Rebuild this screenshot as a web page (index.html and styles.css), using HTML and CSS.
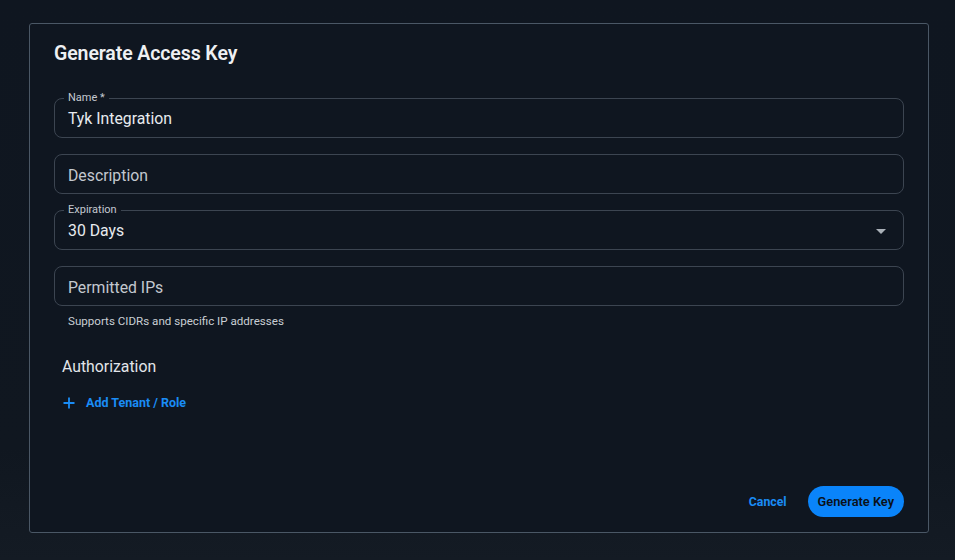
FILE: index.html
```html
<!DOCTYPE html>
<html>
<head>
<meta charset="utf-8">
<link rel="stylesheet" href="styles.css">
</head>
<body>
<div class="page">
  <div class="card">
    <h1 class="title">Generate Access Key</h1>
    <div class="form">
      <div class="field">
        <span class="float-label">Name *</span>
        <span class="value">Tyk Integration</span>
      </div>
      <div class="field">
        <span class="placeholder">Description</span>
      </div>
      <div class="field select">
        <span class="float-label">Expiration</span>
        <span class="value">30 Days</span>
        <svg class="caret" width="10" height="5" viewBox="0 0 10 5"><path d="M0 0h10L5 5z" fill="#a9b0b8"/></svg>
      </div>
      <div class="field-group">
        <div class="field">
          <span class="placeholder">Permitted IPs</span>
        </div>
        <div class="helper">Supports CIDRs and specific IP addresses</div>
      </div>
    </div>
    <div class="auth">
      <div class="auth-title">Authorization</div>
      <button class="add-btn">
        <svg width="12" height="12" viewBox="0 0 12 12"><path d="M6 0.5v11M0.5 6h11" stroke="#1a8cf5" stroke-width="1.8"/></svg>
        <span>Add Tenant / Role</span>
      </button>
    </div>
    <div class="actions">
      <button class="cancel">Cancel</button>
      <button class="primary">Generate Key</button>
    </div>
  </div>
</div>
</body>
</html>
```
FILE: styles.css
```css
* { box-sizing: border-box; }
html, body {
  margin: 0;
  padding: 0;
  background: #101720;
  font-family: Roboto, "Noto Sans", sans-serif;
  color: #e4e7ec;
}
.page {
  width: 955px;
  height: 560px;
  padding: 23px 26px 0 29px;
  background: linear-gradient(180deg, #0f1620 0%, #101720 80%, #141b24 100%);
}
.card {
  width: 900px;
  height: 510px;
  border: 1px solid #4a5765;
  border-radius: 3px;
  background: #0f1620;
  padding: 15px 24px 14px 24px;
  display: flex;
  flex-direction: column;
}
.title {
  margin: 0;
  font-size: 19.5px;
  font-weight: 600;
  line-height: 30px;
  color: #eef0f3;
  letter-spacing: -0.1px;
}
.form {
  margin-top: 29px;
  display: flex;
  flex-direction: column;
  gap: 16px;
}
.field {
  position: relative;
  height: 40px;
  border: 1px solid #3c4551;
  border-radius: 8px;
  display: flex;
  align-items: center;
  padding: 0 13px;
}
.float-label {
  position: absolute;
  left: 9px;
  top: -8px;
  padding: 0 4px;
  background: #0f1620;
  font-size: 11px;
  line-height: 14px;
  color: #c4c9d0;
}
.value {
  font-size: 15.8px;
  color: #e8ebef;
  padding-top: 1px;
}
.placeholder {
  font-size: 15.8px;
  color: #c3c8cf;
  padding-top: 3px;
}
.select .caret {
  position: absolute;
  right: 17px;
  top: 18px;
}
.helper {
  margin-top: 8px;
  padding-left: 14px;
  font-size: 11.6px;
  line-height: 14px;
  color: #c9ced4;
}
.auth {
  margin-top: 28px;
  padding-left: 8px;
  display: flex;
  flex-direction: column;
  align-items: flex-start;
}
.auth-title {
  font-size: 15.8px;
  line-height: 22px;
  color: #e2e5ea;
}
.add-btn {
  margin-top: 17px;
  background: none;
  border: none;
  padding: 0 0 0 1px;
  display: flex;
  align-items: center;
  gap: 11px;
  font-family: inherit;
  font-size: 12.5px;
  font-weight: 700;
  color: #1a8cf5;
  cursor: pointer;
}
.actions {
  margin-top: auto;
  margin-bottom: 1px;
  display: flex;
  justify-content: flex-end;
  align-items: center;
  gap: 21px;
}
.cancel {
  background: none;
  border: none;
  padding: 0;
  font-family: inherit;
  font-size: 12.3px;
  font-weight: 700;
  color: #1a8cf5;
}
.primary {
  height: 31px;
  padding: 0 10px;
  border: none;
  border-radius: 16px;
  background: #0a84fa;
  color: #0b1118;
  font-family: inherit;
  font-size: 12.8px;
  font-weight: 600;
}
```
